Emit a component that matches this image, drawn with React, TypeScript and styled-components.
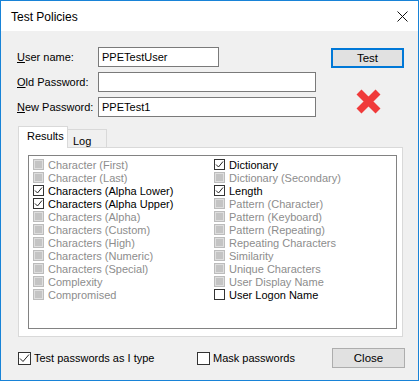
import React from "react";
import styled, { createGlobalStyle } from "styled-components";

const Global = createGlobalStyle`
  html, body { margin: 0; padding: 0; background: #ffffff; }
  body { font-family: "Liberation Sans", Arial, sans-serif; font-size: 11px; color: #000; }
  #root { width: 420px; height: 382px; }
`;

const Window = styled.div`
  width: 419px;
  height: 381px;
  box-sizing: border-box;
  border: 1px solid #1883d7;
  display: flex;
  flex-direction: column;
  background: #f0f0f0;
`;

const TitleBar = styled.div`
  height: 30px;
  background: #ffffff;
  display: flex;
  align-items: center;
  justify-content: space-between;
  padding: 0 10px 0 10px;
  flex: none;
`;

const Title = styled.div`
  font-size: 12px;
  padding-top: 2px;
`;

const Body = styled.div`
  flex: 1;
  display: flex;
  flex-direction: column;
  padding: 16px 13px 0 16px;
`;

const Top = styled.div`
  display: flex;
  gap: 15px;
`;

const Form = styled.div`
  display: grid;
  grid-template-columns: 81px 218px;
  grid-auto-rows: 20px;
  row-gap: 5px;
  align-items: center;
`;

const Label = styled.label`
  white-space: nowrap;
  line-height: 20px;
`;

const Field = styled.div<{ $w?: number }>`
  box-sizing: border-box;
  height: 20px;
  width: ${(p) => (p.$w ? `${p.$w}px` : "100%")};
  border: 1px solid #7a7a7a;
  background: #ffffff;
  padding: 0 3px;
  line-height: 18px;
  font-size: 11px;
`;

const Actions = styled.div`
  width: 73px;
  display: flex;
  flex-direction: column;
  align-items: center;
  padding-top: 1px;
`;

const Button = styled.div<{ $default?: boolean }>`
  box-sizing: border-box;
  width: 73px;
  height: 20px;
  background: #e1e1e1;
  border: ${(p) => (p.$default ? "2px solid #0078d7" : "1px solid #adadad")};
  display: flex;
  align-items: center;
  justify-content: center;
  font-size: 11.5px;
`;

const Fail = styled.svg`
  margin-top: 21px;
  margin-left: 1px;
`;

const Tabs = styled.div`
  margin-top: 10px;
  margin-left: 1px;
  width: 385px;
`;

const TabStrip = styled.div`
  display: flex;
  align-items: flex-end;
  height: 21px;
  position: relative;
  z-index: 1;
  margin-bottom: -1px;
`;

const Tab = styled.div<{ $active?: boolean }>`
  box-sizing: border-box;
  height: ${(p) => (p.$active ? 22 : 19)}px;
  padding: ${(p) => (p.$active ? "0 7px 0 8px" : "2px 0 0 5px")};
  width: ${(p) => (p.$active ? 50 : 39)}px;
  border: 1px solid #d9d9d9;
  border-bottom: ${(p) => (p.$active ? "none" : "1px solid #d9d9d9")};
  border-left: ${(p) => (p.$active ? "1px solid #d9d9d9" : "none")};
  background: ${(p) => (p.$active ? "#ffffff" : "#f0f0f0")};
  line-height: 18px;
`;

const Panel = styled.div`
  box-sizing: border-box;
  height: 190px;
  border: 1px solid #d9d9d9;
  background: #ffffff;
  padding: 7px 5px 7px 9px;
`;

const List = styled.div`
  box-sizing: border-box;
  height: 100%;
  border: 1px solid #828282;
  background: #ffffff;
  padding: 2px 4px 1px;
  display: grid;
  grid-template-columns: 181px 1fr;
  grid-auto-flow: column;
  grid-template-rows: repeat(11, 13px);
`;

const Item = styled.div<{ $disabled?: boolean }>`
  display: flex;
  align-items: center;
  gap: 4px;
  height: 13px;
  white-space: nowrap;
  color: ${(p) => (p.$disabled ? "#8d8d8d" : "#000000")};
  font-size: 11px;
`;

const SmallBox = styled.div<{ $state: "disabled" | "checked" | "empty" }>`
  box-sizing: border-box;
  width: 11px;
  height: 11px;
  flex: none;
  border: 1px solid ${(p) => (p.$state === "disabled" ? "#bcbcbc" : "#333333")};
  background: ${(p) => (p.$state === "disabled" ? "#c4c4c4" : "#ffffff")};
  box-shadow: ${(p) => (p.$state === "disabled" ? "inset 0 0 0 1px #dedede" : "none")};
  display: flex;
  align-items: center;
  justify-content: center;
`;

const Bottom = styled.div`
  display: flex;
  align-items: center;
  margin-top: 11px;
  margin-left: 1px;
`;

const Check = styled.label<{ $w: number }>`
  display: flex;
  align-items: center;
  gap: 3px;
  width: ${(p) => p.$w}px;
  white-space: nowrap;
  font-size: 11px;
`;

const BigBox = styled.div`
  box-sizing: border-box;
  width: 13px;
  height: 13px;
  border: 1px solid #333333;
  background: #ffffff;
  display: flex;
  align-items: center;
  justify-content: center;
  flex: none;
`;

const Spacer = styled.div`
  flex: 1;
`;

type S = "disabled" | "checked" | "empty";

const col1: [string, S][] = [
  ["Character (First)", "disabled"],
  ["Character (Last)", "disabled"],
  ["Characters (Alpha Lower)", "checked"],
  ["Characters (Alpha Upper)", "checked"],
  ["Characters (Alpha)", "disabled"],
  ["Characters (Custom)", "disabled"],
  ["Characters (High)", "disabled"],
  ["Characters (Numeric)", "disabled"],
  ["Characters (Special)", "disabled"],
  ["Complexity", "disabled"],
  ["Compromised", "disabled"],
];

const col2: [string, S][] = [
  ["Dictionary", "checked"],
  ["Dictionary (Secondary)", "disabled"],
  ["Length", "checked"],
  ["Pattern (Character)", "disabled"],
  ["Pattern (Keyboard)", "disabled"],
  ["Pattern (Repeating)", "disabled"],
  ["Repeating Characters", "disabled"],
  ["Similarity", "disabled"],
  ["Unique Characters", "disabled"],
  ["User Display Name", "disabled"],
  ["User Logon Name", "empty"],
];

const SmallTick = () => (
  <svg width="9" height="9" viewBox="0 0 9 9">
    <path d="M1 4.5 L3.5 7 L8 1.5" fill="none" stroke="#222" strokeWidth="1" />
  </svg>
);

const BigTick = () => (
  <svg width="11" height="11" viewBox="0 0 11 11">
    <path d="M1 5.5 L4 8.5 L10 1.5" fill="none" stroke="#222" strokeWidth="1" />
  </svg>
);

const ListItem = ({ label, state }: { label: string; state: S }) => (
  <Item $disabled={state === "disabled"}>
    <SmallBox $state={state}>{state === "checked" && <SmallTick />}</SmallBox>
    {label}
  </Item>
);

export default function App() {
  return (
    <>
      <Global />
      <Window>
        <TitleBar>
          <Title>Test Policies</Title>
          <svg width="11" height="11" viewBox="0 0 11 11">
            <path d="M0.5 0.5 L10.5 10.5 M10.5 0.5 L0.5 10.5" stroke="#111" strokeWidth="1" />
          </svg>
        </TitleBar>
        <Body>
          <Top>
            <Form>
              <Label>
                <u>U</u>ser name:
              </Label>
              <Field $w={121}>PPETestUser</Field>
              <Label>
                <u>O</u>ld Password:
              </Label>
              <Field />
              <Label>
                <u>N</u>ew Password:
              </Label>
              <Field>PPETest1</Field>
            </Form>
            <Actions>
              <Button $default>Test</Button>
              <Fail width="27" height="25" viewBox="0 0 27 25">
                <path d="M4 3 L23 22 M23 3 L4 22" stroke="#f03a3a" strokeWidth="7" />
              </Fail>
            </Actions>
          </Top>
          <Tabs>
            <TabStrip>
              <Tab $active>Results</Tab>
              <Tab>Log</Tab>
            </TabStrip>
            <Panel>
              <List>
                {col1.map(([l, s]) => (
                  <ListItem key={l} label={l} state={s} />
                ))}
                {col2.map(([l, s]) => (
                  <ListItem key={l} label={l} state={s} />
                ))}
              </List>
            </Panel>
          </Tabs>
          <Bottom>
            <Check $w={179}>
              <BigBox>
                <BigTick />
              </BigBox>
              Test passwords as I type
            </Check>
            <Check $w={120}>
              <BigBox />
              Mask passwords
            </Check>
            <Spacer />
            <Button>Close</Button>
          </Bottom>
        </Body>
      </Window>
    </>
  );
}
